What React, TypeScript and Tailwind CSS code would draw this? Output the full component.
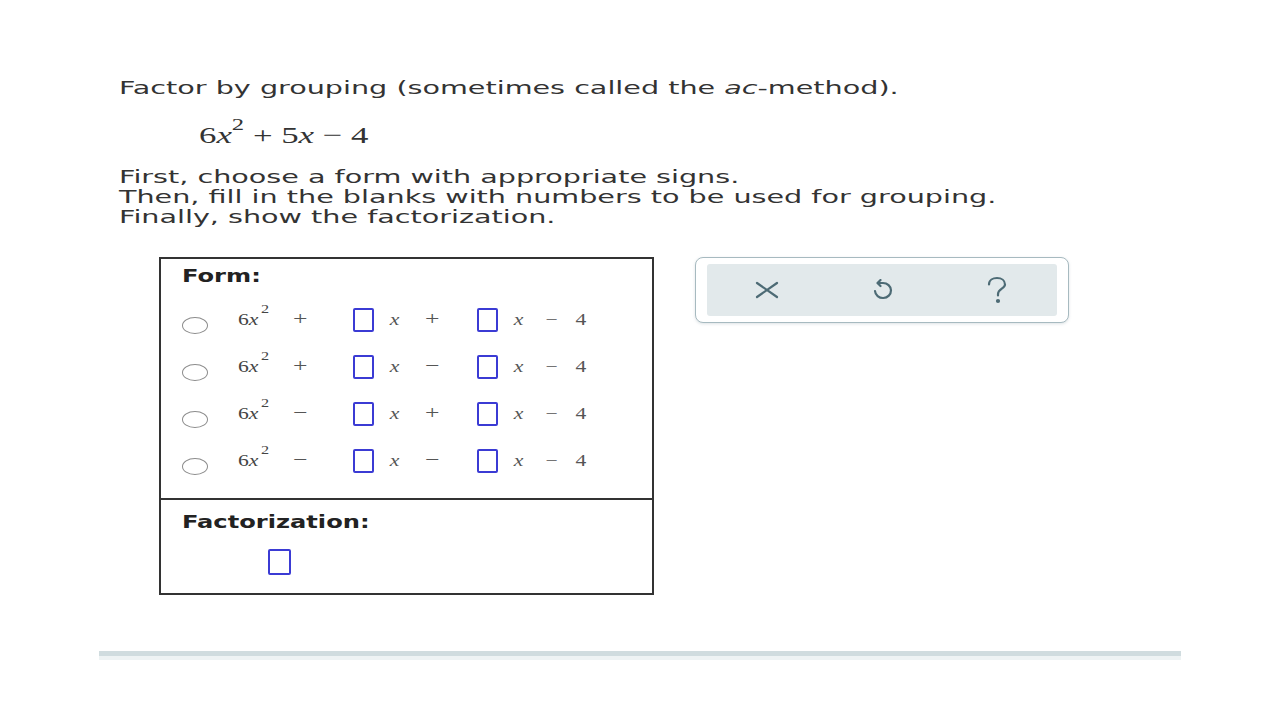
import React from "react";
import { clsx } from "clsx";

// Text in the reference is horizontally stretched, so glyph runs are scaled on x.
function Wide({
  children,
  className,
  center,
}: {
  children: React.ReactNode;
  className?: string;
  center?: boolean;
}) {
  return (
    <span
      className={clsx(
        "inline-block whitespace-nowrap",
        center ? "origin-center" : "origin-left",
        className ?? "scale-x-[1.59]"
      )}
    >
      {children}
    </span>
  );
}

function Blank() {
  return <span className="block h-[24px] w-[21px] rounded-[2px] border-2 border-[#3b3bd4] bg-white" />;
}

function Radio() {
  return <span className="mt-[12px] block h-[17px] w-[26px] rounded-[50%] border border-[#8c8c8c] bg-white" />;
}

function Cell({ children, className, big }: { children: React.ReactNode; className?: string; big?: boolean }) {
  return (
    <span
      className={clsx(
        "flex justify-center font-['Liberation_Serif',serif] text-[#555]",
        big ? "text-[19px]" : "text-[16px]",
        className
      )}
    >
      <Wide center className="scale-x-[1.35]">
        {children}
      </Wide>
    </span>
  );
}

function FormRow({ first, second }: { first: string; second: string }) {
  return (
    <div className="flex h-[47px] items-center">
      <Radio />
      <span className="ml-[30px] w-[40px] font-['Liberation_Serif',serif] text-[16px] text-[#444]">
        <Wide className="scale-x-[1.35]">
          6<i>x</i>
          <sup className="-top-[1em] ml-[2px] text-[12px]">2</sup>
        </Wide>
      </span>
      <Cell big className="ml-[6px] w-[32px]">
        {first}
      </Cell>
      <span className="ml-[37px]">
        <Blank />
      </span>
      <Cell className="ml-[5px] w-[32px]">
        <i>x</i>
      </Cell>
      <Cell big className="ml-[5px] w-[32px]">
        {second}
      </Cell>
      <span className="ml-[29px]">
        <Blank />
      </span>
      <Cell className="ml-[5px] w-[32px]">
        <i>x</i>
      </Cell>
      <Cell className="ml-[5px] w-[24px]">−</Cell>
      <Cell className="ml-[5px] w-[24px]">4</Cell>
    </div>
  );
}

function Toolbar() {
  return (
    <div className="h-[66px] w-[374px] rounded-[8px] border border-[#a7bac0] bg-white px-[11px] py-[6px] shadow-[0_1px_3px_rgba(120,140,150,0.25)]">
      <div className="flex h-full items-center justify-center gap-[89px] rounded-[3px] bg-[#e2e9eb] text-[#4d6b75]">
        <svg width="26" height="18" viewBox="0 0 26 18" fill="none" stroke="currentColor" strokeWidth="2.2" strokeLinecap="round">
          <path d="M3 2 L23 16 M23 2 L3 16" />
        </svg>
        <svg width="26" height="22" viewBox="0 0 26 22" fill="none" stroke="currentColor" strokeWidth="2.2" strokeLinecap="round" strokeLinejoin="round">
          <path d="M9 4 H14 A8 7.5 0 1 1 6 12" />
          <path d="M11.5 1 L8.5 4 L11.5 7" />
        </svg>
        <svg width="26" height="28" viewBox="0 0 26 28" fill="none" stroke="currentColor" strokeWidth="2.2" strokeLinecap="round">
          <path d="M5 8.5 C5 4 9 2 13 2 C17.5 2 21 4.5 21 8.5 C21 12.5 14 13 14 18 V19.5" />
          <circle cx="14" cy="25" r="1" fill="currentColor" />
        </svg>
      </div>
    </div>
  );
}

export default function App() {
  return (
    <div className="min-h-[720px] w-[1280px] bg-white font-['DejaVu_Sans',sans-serif] text-[#333]">
      <div className="pl-[119px] pt-[78px]">
        <p className="h-[20px] text-[18px] leading-[20px]">
          <Wide>
            Factor by grouping (sometimes called the <i>ac</i>-method).
          </Wide>
        </p>
        <p className="mt-[22px] h-[30px] pl-[80px] font-['Liberation_Serif',serif] text-[24px] leading-[30px] text-[#333]">
          <Wide className="scale-x-[1.45]">
            6<i>x</i>
            <sup className="-top-[0.75em] text-[17px]">2</sup> + 5<i>x</i> − 4
          </Wide>
        </p>
        <div className="mt-[17px] text-[18px] leading-[20px]">
          <p className="h-[20px]">
            <Wide>First, choose a form with appropriate signs.</Wide>
          </p>
          <p className="h-[20px]">
            <Wide>Then, fill in the blanks with numbers to be used for grouping.</Wide>
          </p>
          <p className="h-[20px]">
            <Wide>Finally, show the factorization.</Wide>
          </p>
        </div>
      </div>

      <div className="mt-[30px] flex items-start pl-[159px]">
        <div className="w-[495px] border-2 border-[#333] bg-white">
          <div className="pb-[14px] pl-[21px] pt-[7px]">
            <p className="h-[20px] text-[17px] font-bold leading-[20px] text-[#222]">
              <Wide className="scale-x-[1.42]">Form:</Wide>
            </p>
            <div className="mt-[10px]">
              <FormRow first="+" second="+" />
              <FormRow first="+" second="−" />
              <FormRow first="−" second="+" />
              <FormRow first="−" second="−" />
            </div>
          </div>
          <div className="h-[95px] border-t-2 border-[#333] pl-[21px] pt-[12px]">
            <p className="h-[20px] text-[17px] font-bold leading-[20px] text-[#222]">
              <Wide className="scale-x-[1.42]">Factorization:</Wide>
            </p>
            <div className="ml-[86px] mt-[17px] h-[26px] w-[23px] rounded-[2px] border-2 border-[#3b3bd4]" />
          </div>
        </div>
        <div className="ml-[41px]">
          <Toolbar />
        </div>
      </div>

      <div className="ml-[99px] mt-[56px] w-[1082px]">
        <div className="h-[5px] bg-[#d0dcdf]" />
        <div className="h-[4px] bg-[#eef3f4]" />
      </div>
    </div>
  );
}
